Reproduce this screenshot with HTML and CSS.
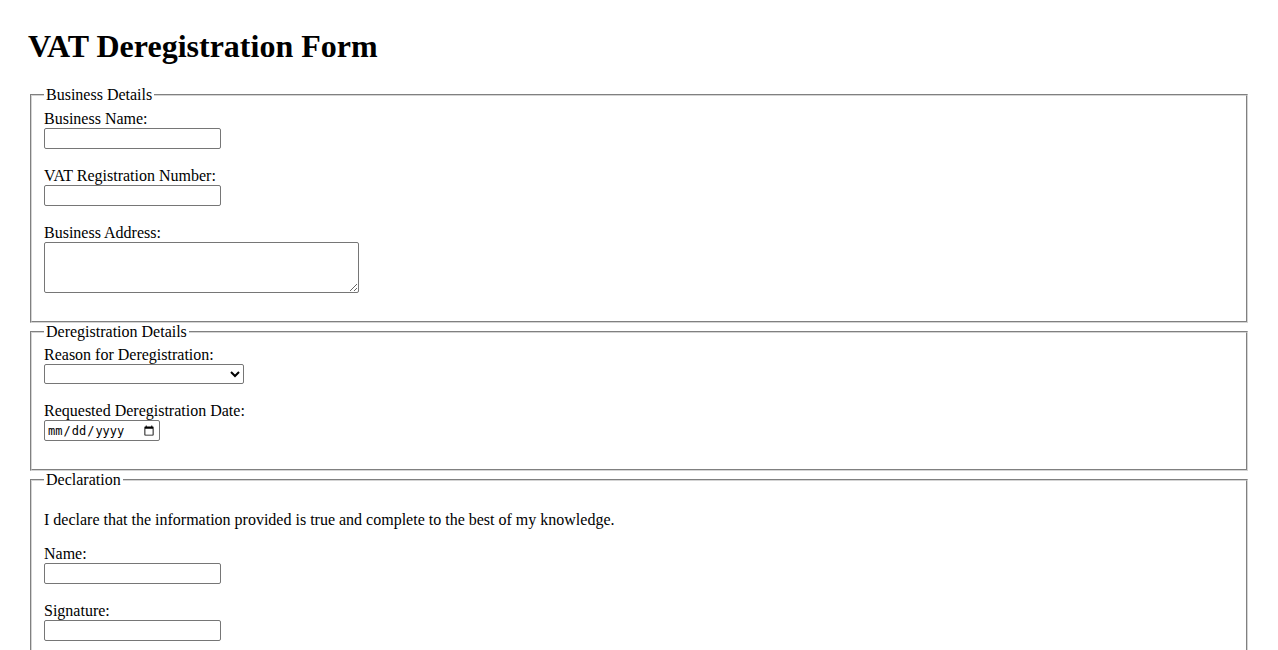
FILE: index.html
```html
<!DOCTYPE html>
<html lang="en">
<head>
<meta charset="utf-8">
<title>VAT Deregistration Form</title>
<link rel="stylesheet" href="styles.css">
</head>
<body>
<h1 class="title">VAT Deregistration Form</h1>
<form class="form">
  <fieldset class="group">
    <legend>Business Details</legend>
    <label for="bname">Business Name:</label><br>
    <input class="text" type="text" id="bname"><br><br>
    <label for="vatno">VAT Registration Number:</label><br>
    <input class="text" type="text" id="vatno"><br><br>
    <label for="baddr">Business Address:</label><br>
    <textarea class="area" id="baddr"></textarea><br><br>
  </fieldset>
  <fieldset class="group">
    <legend>Deregistration Details</legend>
    <label for="reason">Reason for Deregistration:</label><br>
    <select class="choice" id="reason"><option></option></select><br><br>
    <label for="date">Requested Deregistration Date:</label><br>
    <input class="date" type="date" id="date"><br><br>
  </fieldset>
  <fieldset class="group">
    <legend>Declaration</legend>
    <p>I declare that the information provided is true and complete to the best of my knowledge.</p>
    <label for="name">Name:</label><br>
    <input class="text" type="text" id="name"><br><br>
    <label for="sig">Signature:</label><br>
    <input class="text" type="text" id="sig"><br><br>
  </fieldset>
</form>
</body>
</html>
```
FILE: styles.css
```css
html { background: #fff; }
body {
  margin: 8px;
  padding: 20px;
  font-family: "Liberation Serif", "Times New Roman", serif;
  font-size: 16px;
  color: #000;
}
.title {
  margin: 0 0 21px;
  font-size: 32px;
  font-weight: bold;
}
.group {
  margin: 0 2px;
  border: 2px groove #d4d4d4;
}
.text {
  box-sizing: border-box;
  width: 177px;
  height: 21px;
  border: 1px solid #767676;
  border-radius: 2px;
  font-size: 13.33px;
  font-family: "Liberation Sans", Arial, sans-serif;
}
.area {
  box-sizing: border-box;
  width: 315px;
  height: 51px;
  border: 1px solid #767676;
  border-radius: 2px;
  vertical-align: bottom;
}
.choice {
  box-sizing: border-box;
  width: 200px;
  height: 20px;
  border: 1px solid #767676;
  border-radius: 2px;
  background: #fff;
  font-size: 13.33px;
}
.date {
  box-sizing: border-box;
  width: 116px;
  height: 21px;
  border: 1px solid #767676;
  border-radius: 2px;
  font-family: "DejaVu Sans Mono", "Liberation Mono", monospace;
  font-size: 12px;
  padding: 1px 2px;
}
```
